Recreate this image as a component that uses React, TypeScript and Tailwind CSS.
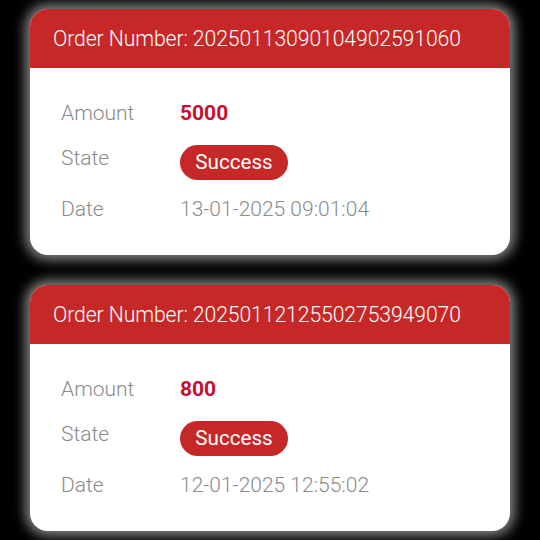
const orders = [
    { id: '20250113090104902591060', amount: '5000', state: 'Success', date: '13-01-2025 09:01:04' },
    { id: '20250112125502753949070', amount: '800', state: 'Success', date: '12-01-2025 12:55:02' },
];

function OrderCard({ order }: { order: (typeof orders)[number] }) {
    return (
        <div className="w-[480px] rounded-[18px] bg-white overflow-hidden shadow-[0_0_12px_5px_rgba(255,255,255,0.5)]">
            <div className="h-[59px] bg-[#c62828] pl-[23px] flex items-center">
                <span className="text-[21.2px] font-light text-white tracking-[-0.1px]">Order Number: {order.id}</span>
            </div>
            <div className="pl-[31px] pt-[35px] pb-[34px] flex flex-col">
                <div className="flex items-center h-[22px]">
                    <span className="w-[119px] text-[21px] font-light text-[#8a8a8a]">Amount</span>
                    <span className="text-[21px] font-bold text-[#c8102e]">{order.amount}</span>
                </div>
                <div className="flex items-center h-[35px] mt-[20px]">
                    <span className="w-[119px] text-[21px] font-light text-[#8a8a8a] -mt-[8px]">State</span>
                    <span className="h-[35px] w-[108px] justify-center rounded-full bg-[#c62828] text-white text-[20.6px] flex items-center">{order.state}</span>
                </div>
                <div className="flex items-center h-[22px] mt-[19px]">
                    <span className="w-[119px] text-[21px] font-light text-[#8a8a8a]">Date</span>
                    <span className="text-[21px] font-light text-[#8a8a8a]">{order.date}</span>
                </div>
            </div>
        </div>
    );
}

export default function App() {
    return (
        <div className="w-[540px] h-[540px] bg-black flex flex-col items-center pt-[9px] gap-[30px] font-['Roboto',sans-serif] overflow-hidden">
            {orders.map((o) => (
                <OrderCard key={o.id} order={o} />
            ))}
        </div>
    );
}
